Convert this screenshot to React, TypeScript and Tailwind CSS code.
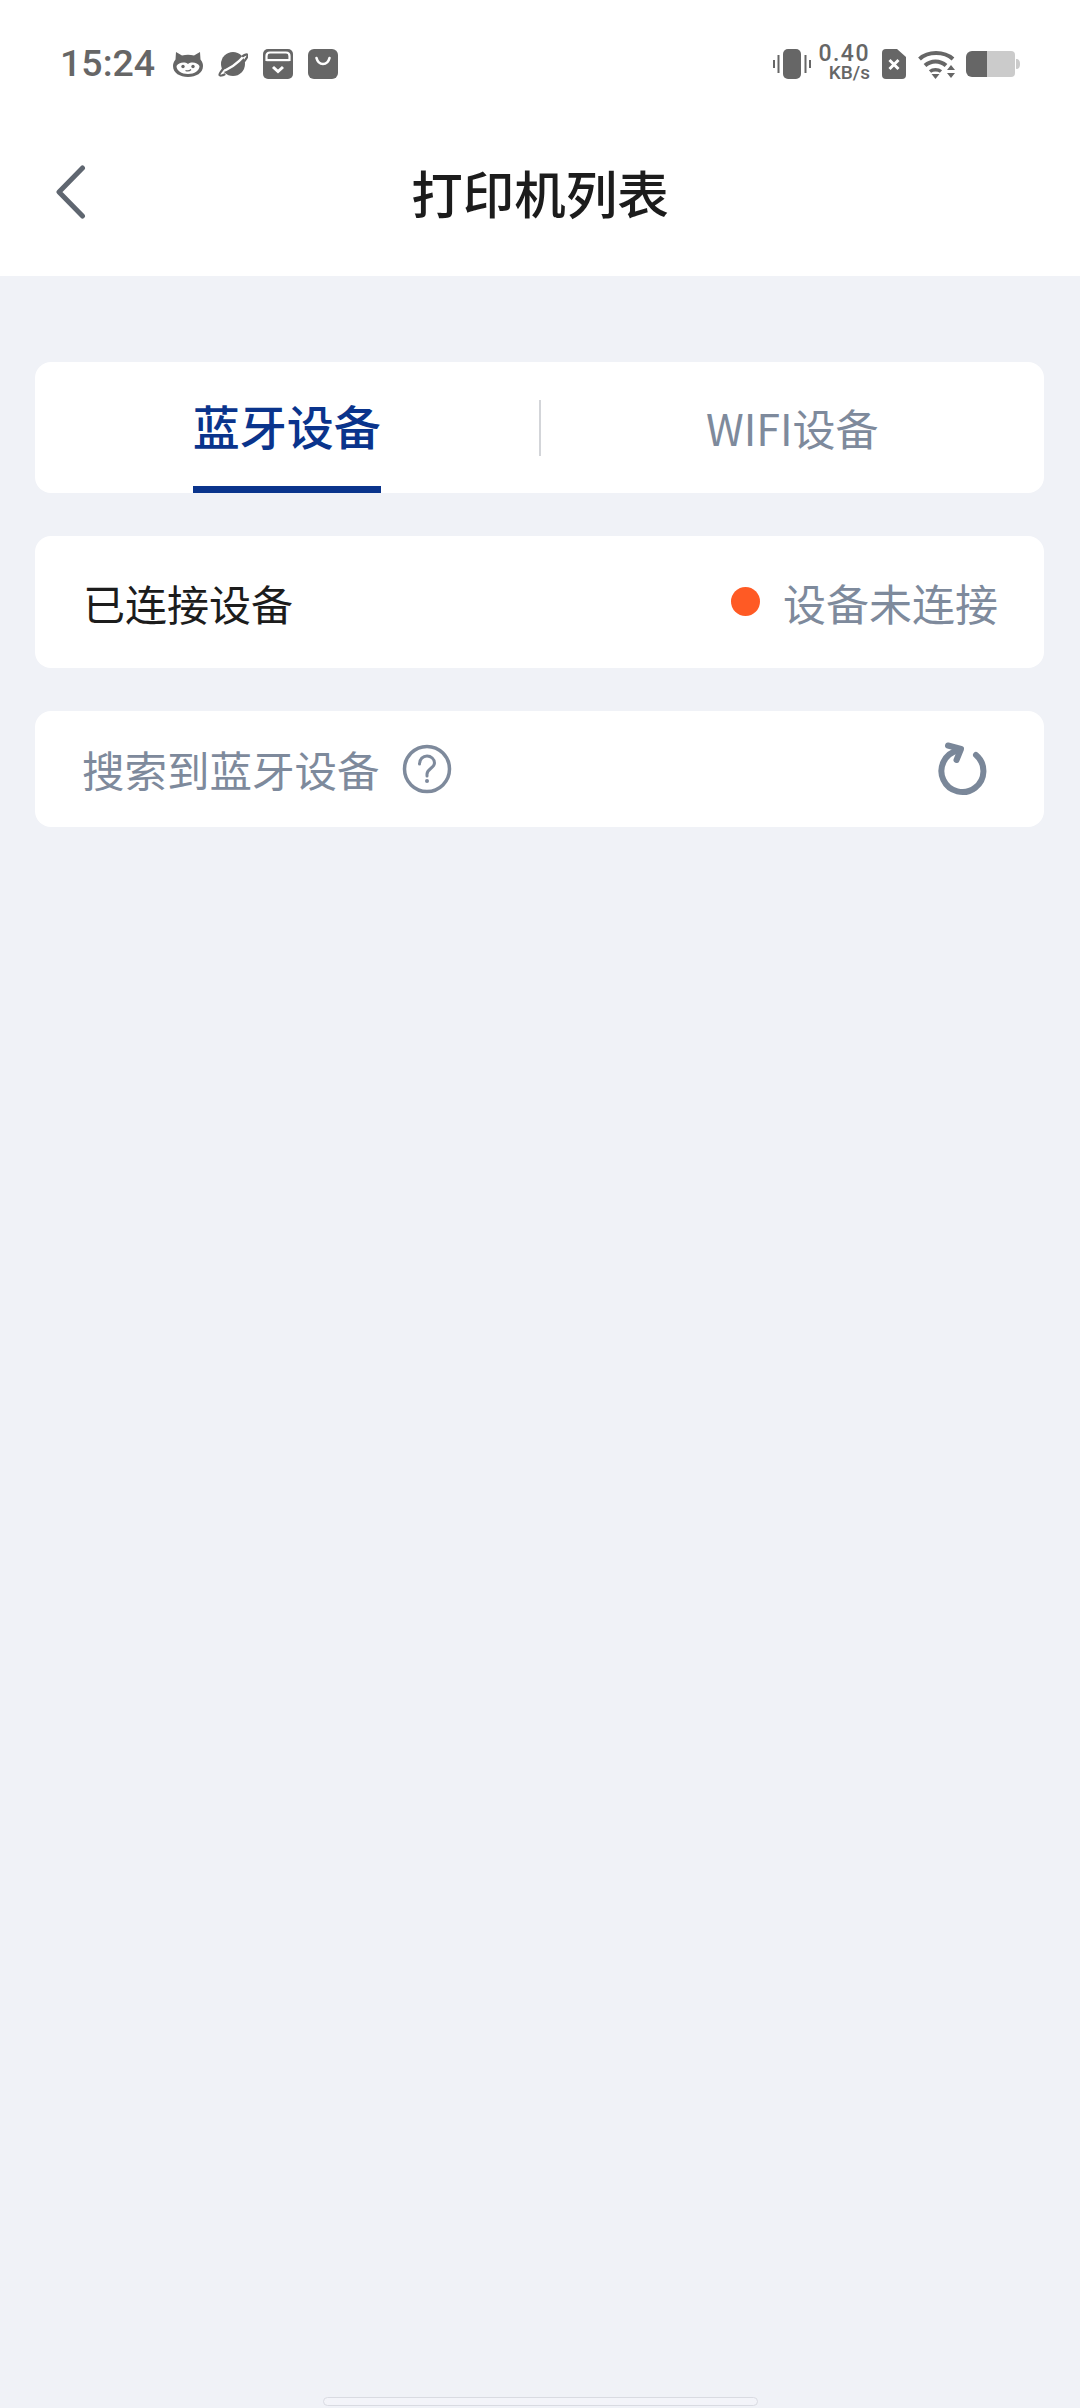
import React, { FC } from 'react';

const cjk = 'font-["Noto_Sans_CJK_SC",sans-serif]';

const CatIcon: FC = () => (
  <svg width="30" height="26" viewBox="0 0 30 26">
    <path d="M3 1l6 3.500c4-1 8-1 12 0L27 1l.5 7.500C29.500 11 30 13 30 15c0 7-7 11-15 11S0 22 0 15c0-2 .5-4 2.500-6.500z" fill="#666" />
    <path d="M3.500 15c2-3.500 8-4.500 11.500-2 3.500-2.500 9.500-1.500 11.500 2 0 4.500-5 8-11.500 8S3.500 19.500 3.500 15z" fill="#fff" />
    <circle cx="10" cy="15.500" r="1.700" fill="#666" />
    <circle cx="20" cy="15.500" r="1.700" fill="#666" />
    <path d="M12.500 19.500c2 .8 4 .5 5.500-1" stroke="#666" strokeWidth="1.300" fill="none" />
  </svg>
);

const PlanetIcon: FC = () => (
  <svg width="30" height="26" viewBox="0 0 30 26">
    <circle cx="15" cy="13" r="12" fill="#666" />
    <path d="M2 21C10 19 20 12 27 4" stroke="#fff" strokeWidth="2.500" fill="none" />
    <path d="M25 5c2-1.500 4-2 4.500-1 .5 1.500-1 3.500-3 6M5 18c-2 2.500-4 5-3.500 6 .5 1 3 .5 5-.5" stroke="#666" strokeWidth="2.200" fill="none" strokeLinecap="round" />
  </svg>
);

const BoxIcon: FC = () => (
  <svg width="30" height="30" viewBox="0 0 30 30">
    <rect width="30" height="30" rx="5" fill="#666" />
    <path d="M3.500 12V7c0-2 1.500-3.500 3.500-3.500h16c2 0 3.500 1.500 3.500 3.500v5" stroke="#fff" strokeWidth="2.200" fill="none" />
    <rect x="3.500" y="10" width="23" height="2.200" fill="#fff" />
    <path d="M10 18l5 4.500 5-4.500" stroke="#fff" strokeWidth="3" fill="none" />
  </svg>
);

const BagIcon: FC = () => (
  <svg width="30" height="30" viewBox="0 0 30 30">
    <rect width="30" height="30" rx="6" fill="#666" />
    <path d="M8.500 9c1 4 3.500 6 6.500 6s5.500-2 6.500-6" stroke="#fff" strokeWidth="2.600" fill="none" strokeLinecap="round" />
  </svg>
);

const VibrateIcon: FC = () => (
  <svg width="38" height="30" viewBox="0 0 38 30">
    <rect x="10" y="0" width="18" height="30" rx="5" fill="#666" />
    <path d="M5.500 6v18M1 11v8M32.500 6v18M37 11v8" stroke="#666" strokeWidth="2" />
  </svg>
);

const SimIcon: FC = () => (
  <svg width="24" height="30" viewBox="0 0 24 30">
    <path d="M4 0h11l9 8v18a4 4 0 0 1-4 4H4a4 4 0 0 1-4-4V4a4 4 0 0 1 4-4z" fill="#666" />
    <path d="M7.500 11l9 9M16.500 11l-9 9" stroke="#fff" strokeWidth="3" />
  </svg>
);

const WifiIcon: FC = () => (
  <svg width="38" height="30" viewBox="0 0 38 30">
    <path d="M1.500 10C10 2 26 2 35 10" stroke="#666" strokeWidth="4" fill="none" />
    <path d="M7 16.500c6-5.500 15-5.500 21 0" stroke="#666" strokeWidth="4" fill="none" />
    <path d="M12 22.500c3-2.500 8-2.500 11 0" stroke="#666" strokeWidth="3.500" fill="none" />
    <path d="M13.500 25h8L17.500 30z" fill="#666" />
    <path d="M29 21h8l-4-5zM29 24h8l-4 5z" fill="#666" />
  </svg>
);

const BatteryIcon: FC = () => (
  <svg width="54" height="26" viewBox="0 0 54 26">
    <path d="M21 0h24a4 4 0 0 1 4 4v18a4 4 0 0 1-4 4H21z" fill="#cbcbcb" />
    <path d="M50 8c3 0 4 2 4 5s-1 5-4 5z" fill="#cbcbcb" />
    <path d="M21 0H6a6 6 0 0 0-6 6v14a6 6 0 0 0 6 6h15z" fill="#666" />
  </svg>
);

const StatusBar: FC = () => (
  <div className="flex h-[126px] items-center justify-between pl-[60px] pr-[60px] pt-[1px]">
    <div className="flex items-center">
      <span className='font-["Roboto",sans-serif] text-[37.500px] font-medium leading-none text-[#666]'>15:24</span>
      <div className="ml-[18px] flex items-center gap-[15px]">
        <CatIcon />
        <PlanetIcon />
        <BoxIcon />
        <BagIcon />
      </div>
    </div>
    <div className="flex items-center">
      <VibrateIcon />
      <div className='ml-[10px] flex w-[49px] flex-col items-end font-["Roboto",sans-serif] font-medium text-[#666]'>
        <span className="text-[23px] leading-[18px] tracking-[1.5px]">0.40</span>
        <span className="text-[19px] leading-[19px]">KB/s</span>
      </div>
      <div className="ml-[12px]">
        <SimIcon />
      </div>
      <div className="ml-[12px]">
        <WifiIcon />
      </div>
      <div className="ml-[10px]">
        <BatteryIcon />
      </div>
    </div>
  </div>
);

const NavBar: FC = () => (
  <div className="relative flex h-[150px] items-start justify-center pt-[35px]">
    <svg className="absolute left-[54px] top-[39px]" width="32" height="54" viewBox="0 0 32 54">
      <path d="M28.500 3L5 27l23.500 24" stroke="#5f6670" strokeWidth="5" fill="none" strokeLinecap="round" strokeLinejoin="round" />
    </svg>
    <h1 className={`${cjk} text-[51.500px] font-medium leading-[62px] text-[#1c1c1c]`}>打印机列表</h1>
  </div>
);

const Tabs: FC = () => (
  <div className="flex h-[131px] items-center rounded-[16px] bg-white">
    <div className="flex h-full flex-1 justify-center">
      <span className={`${cjk} flex h-full items-center border-b-[7px] border-[#0a348c] pt-[3px] text-[47px] font-medium text-[#0a348c]`}>
        蓝牙设备
      </span>
    </div>
    <div className="h-[56px] w-[2px] bg-[#d3d5d9]" />
    <div className="flex flex-1 justify-center">
      <span className={`${cjk} text-[43px] text-[#7e8a9c]`}>WIFI设备</span>
    </div>
  </div>
);

const App: FC = () => {
  return (
    <div className="flex min-h-[2408px] flex-col bg-[#f0f2f7]">
      <header className="bg-white">
        <StatusBar />
        <NavBar />
      </header>
      <main className="flex flex-col pl-[35px] pr-[36px] pt-[86px]">
        <Tabs />
        <div className="mt-[43px] flex h-[132px] items-center justify-between rounded-[16px] bg-white pl-[48px] pr-[46px]">
          <span className={`${cjk} text-[42px] text-[#1c1c1c]`}>已连接设备</span>
          <div className="flex items-center gap-[23px]">
            <span className="h-[29px] w-[29px] -translate-y-[1px] rounded-full bg-[#ff5a24]" />
            <span className={`${cjk} text-[43px] text-[#7e8a9c]`}>设备未连接</span>
          </div>
        </div>
        <div className="mt-[43px] flex h-[116px] items-center justify-between rounded-[16px] bg-white pl-[47px] pr-[51px]">
          <div className="flex items-center gap-[22px]">
            <span className={`${cjk} text-[42.500px] text-[#7e8a9c]`}>搜索到蓝牙设备</span>
            <svg width="50" height="50" viewBox="0 0 50 50">
              <circle cx="25" cy="25" r="22.500" stroke="#7e8a9c" strokeWidth="3.500" fill="none" />
              <path d="M17.500 20c0-5 3.500-8 7.500-8s7.500 3 7.500 7c0 5-7 5.500-7.500 11v2" stroke="#7e8a9c" strokeWidth="3" fill="none" strokeLinecap="round" />
              <circle cx="25" cy="37" r="2" fill="#7e8a9c" />
            </svg>
          </div>
          <svg className="-translate-y-[2px]" width="60" height="60" viewBox="0 0 60 60">
            <path d="M43 18A21 21 0 1 1 25 13.500" stroke="#7a8799" strokeWidth="6" fill="none" strokeLinecap="round" />
            <path d="M15 8.500L28 12l-4.500 11" stroke="#7a8799" strokeWidth="6" fill="none" strokeLinecap="round" strokeLinejoin="round" />
          </svg>
        </div>
      </main>
      <div className="mt-auto mb-[2px] flex justify-center">
        <div className="h-[9px] w-[435px] rounded-full border border-[#d9dbe2] bg-[#f3f4f9]" />
      </div>
    </div>
  );
};

export default App;
